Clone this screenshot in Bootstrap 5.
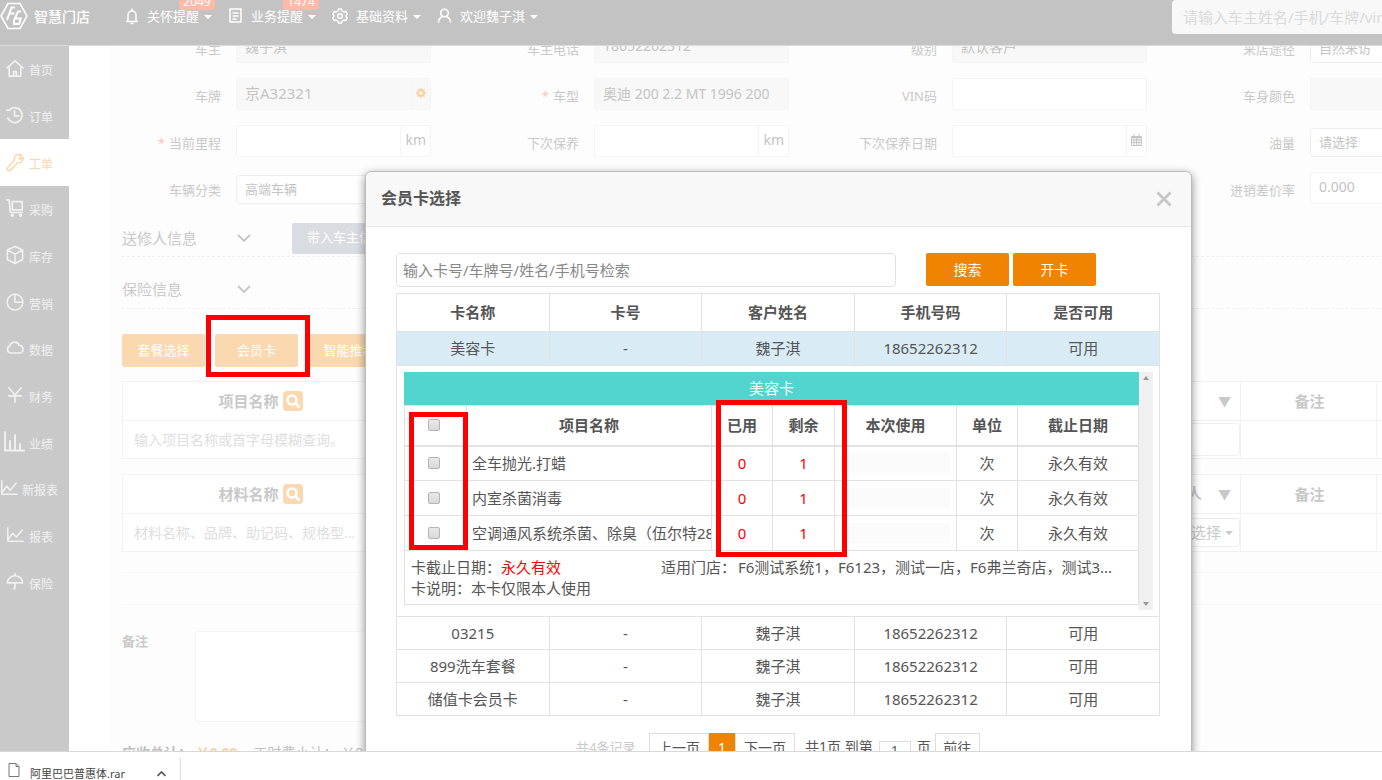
<!DOCTYPE html>
<html lang="zh-CN">
<head>
<meta charset="utf-8">
<meta name="viewport" content="width=device-width, initial-scale=1">
<title>智慧门店</title>
<link href="https://cdn.jsdelivr.net/npm/bootstrap@5.3.0/dist/css/bootstrap.min.css" rel="stylesheet">
<style>
  body { font-family: "Noto Sans", "Noto Sans CJK SC", sans-serif; font-size: 15px; line-height: 21px; color: #555; background: #fff; }
  svg { display: block; flex: none; }
  .line-icon { fill: none; stroke: currentColor; stroke-width: 2; stroke-linecap: round; stroke-linejoin: round; }
  .screen { height: 100vh; }

  /* top bar */
  .top-bar { height: 46px; background: #c3c3c3; color: #fff; font-size: 13px; border-bottom: 1px solid #dcdcdc; }
  .top-bar a { color: #fff; }
  .top-inner { height: 32px; }
  .brand { gap: 6px; margin-right: 35px; }
  .brand-name { font-size: 14px; font-weight: 500; }
  .menu-link { gap: 8px; }
  .menu-link::after { content: ""; border: 4px solid transparent; border-top-color: #fff; border-bottom: 0; margin-left: -3px; margin-top: 2px; }
  .count-tag { top: -12px; right: -3px; width: 36px; height: 16px; line-height: 16px; background: #ffb9a9; font-size: 12px; border-radius: 3px; text-align: center; }
  .top-search { width: 240px; height: 34px; margin-right: -30px; background: #f8f8f8; border: 0; border-radius: 4px; font-size: 15px; padding: 0 11px; }
  .top-search::placeholder { color: #dadada; opacity: 1; }

  /* side menu */
  .side { width: 69px; background: #c9c9c9; flex: none; }
  .side-list { height: 560px; }
  .side-list a { flex: 1; color: #f1f1f1; font-size: 12px; gap: 5px; padding: 0 0 0 6px; }
  .side-list a svg { margin-bottom: 2px; }
  .side-list a span { padding-top: 3px; }
  .side-list a.wide { padding-left: 0; gap: 4px; }
  .side-list a.current { background: #fff; color: #fbd5ae; }

  /* work order page behind the dialog */
  .page-sheet { min-width: 1444px; margin: -23px 0 0 41px; padding-left: 12px; background: #fdfdfd; color: #c9c9c9; }
  .field-grid { display: grid; grid-template-columns: repeat(4, 1fr); grid-auto-rows: 47px; }
  .field label { width: 99px; text-align: right; font-size: 13px; padding-top: 5px; margin-right: 15px; flex: none; }
  .req { color: #fcc3b8; margin-right: 4px; }
  .field .form-control, .field .form-select, .field .input-group-text { font-size: 14px; line-height: 20px; color: #c4c4c4; border: 1px solid #f5f5f5; border-radius: 2px; padding: 4px 8px 6px; height: 32px; background-color: #fff; }
  .field .box { width: 195px; flex: none; }
  .field .form-control:disabled { background: #f8f8f8; }
  .field .plate { font-size: 15px; }
  .field .form-select { font-size: 13px; height: 29px; padding: 3px 8px; margin-top: 3px; border-color: #eee; border-radius: 4px; background-image: none; }
  .field .input-group-text { padding: 4px 4px 6px; }
  .field .input-group-text.gear { background: #f8f8f8; }
  .fold { border-bottom: 1px dashed #efefef; }
  .fold-a { height: 46px; padding-top: 9px; }
  .fold-b { height: 52px; padding-top: 14px; }
  .fold-name { width: 115px; font-size: 15px; }
  .btn-grey { height: 31px; width: 150px; background: #d9dce1; color: #fff; font-size: 13px; border-radius: 2px; padding: 0 14px; margin-left: 41px; text-align: left; }
  .tools { gap: 10px; padding: 25px 0 14px; }
  .btn-pale { width: 83px; height: 33px; background: #fad8b0; color: #fff; font-size: 13px; border-radius: 2px; padding: 0; }
  .grid-table { table-layout: fixed; border: 1px solid #efefef; border-top-color: #e6e6e6; margin: 0 0 15px; --bs-table-color: #c9c9c9; }
  .grid-table th, .grid-table td { border: 1px solid #f1f1f1; height: 39px; padding: 0 9px 0 11px; vertical-align: middle; background: #fff; color: #c9c9c9; }
  .grid-table td { height: 38px; }
  .grid-table input { font-size: 14px; border: 0; padding: 0; background: transparent; }
  .grid-table input::placeholder { color: #dedede; opacity: 1; }
  .tri { font-size: 13px; font-weight: 400; }
  .find-btn { width: 20px; height: 20px; background: #fad8b0; border: 0; border-radius: 4px; padding: 2px; color: #fff; }
  .cell-box { height: 33px; width: 120px; border: 1px solid #efefef; border-radius: 4px; margin-right: -9px; }
  .cell-drop { height: 29px; width: 120px; border: 1px solid #eee; border-radius: 4px; margin-right: -9px; background: #fff; color: #c9c9c9; font-size: 15px; padding: 0 6px; }
  .thin-block { height: 33px; border: 1px solid #f8f8f8; border-width: 1px 0; margin-top: 20px; }
  .note-row { padding-top: 26px; }
  .note-label { width: 73px; font-size: 13px; font-weight: 700; }
  .note-area { width: 700px; height: 91px; border: 1px solid #f5f5f5; border-radius: 2px; resize: none; }
  .sums { padding-top: 20px; font-size: 14px; gap: 16px; color: #c0c0c0; }
  .sum-main { color: #fad3a5; }

  /* red callout frames */
  .callout { position: absolute; border: 5px solid #f00; pointer-events: none; z-index: 3; }
  .callout-card { left: -9px; top: -19px; width: 104px; height: 62px; }
  .callout-checks { left: 5px; top: 40px; width: 59px; height: 138px; }
  .callout-usage { left: 312px; top: 28px; width: 131px; height: 157px; }

  /* membership card dialog */
  .dialog-layer { position: absolute; inset: 171px 0 0 0; padding-left: 175px; }
  .card-dialog { width: 827px; border: 1px solid #bbb; border-radius: 6px; box-shadow: 0 3px 10px rgba(0,0,0,.45); background: #fff; }
  .dialog-head { height: 55px; background: #f8f8f8; border-bottom: 1px solid #e8e8e8; border-radius: 6px 6px 0 0; padding: 0 19px 0 15px; }
  .dialog-head h1 { font-size: 16px; font-weight: 700; margin: 0; color: #555; }
  .dialog-body { padding: 26px 31px 40px 30px; }
  .find-card { width: 500px; height: 34px; font-size: 15px; padding: 0 6px; border: 1px solid #e2e2e2; border-radius: 4px; margin-right: 30px; }
  .find-card::placeholder { color: #888; opacity: 1; }
  .btn-orange { width: 83px; height: 33px; background: #f08300; color: #fff; font-size: 14px; border-radius: 2px; padding: 0; }
  .btn-orange:hover { background: #d87600; color: #fff; }
  .cards { table-layout: fixed; margin: 6px 0 0; text-align: center; border-color: #e2e2e2; --bs-table-color: #555; }
  .cards th, .cards td { padding: 0; height: 33px; vertical-align: middle; border: 1px solid #e2e2e2; color: #555; }
  .cards thead th { height: 38px; }
  .cards .picked > td { background: #d9ecf5; height: 34px; }
  .cards .open-cell { height: 251px; padding: 6px 6px 6px 7px; vertical-align: top; }
  .usage { table-layout: fixed; margin: 0; --bs-table-color: #555; }
  .usage caption { caption-side: top; background: #52d5ce; color: #fff; height: 33px; line-height: 33px; padding: 0; text-align: center; }
  .usage thead th { height: 40px; border-bottom: 2px solid #e2e2e2; }
  .usage tbody td { height: 35px; overflow: hidden; white-space: nowrap; }
  .usage .num { color: #f00; }
  .usage input[type=checkbox] { width: 12px; height: 12px; margin: 0; display: block; appearance: none; border: 1px solid #b5b5b5; border-radius: 2px; background: linear-gradient(#e9e9e9, #d9d9d9); }
  .usage input[type=checkbox]:checked { background: #f08300; }
  .usage .pad-check { padding-left: 23px; }
  .usage thead .pad-check { vertical-align: top; padding-top: 13px; }
  .usage .use-now { display: block; width: 109px; height: 20px; border: 0; background: #fbfbfb; margin: 0 auto; }
  .usage .item { text-align: left; padding-left: 5px; }
  .card-info { border: 1px solid #e2e2e2; border-top: 0; height: 54px; padding: 6px 7px 0 6px; text-align: left; }
  .card-info > div { white-space: nowrap; }
  .info-left { width: 250px; }
  .info-label { width: 77px; }
  .until { color: #f00; }
  .scroll-strip { width: 14px; background: #f0f0f0; padding: 4px 0; flex: none; height: 238px; }
  .pager { font-size: 14px; margin-top: 17px; padding-left: 180px; line-height: 28px; }
  .pager .total { font-size: 13px; color: #c9c9c9; width: 73px; }
  .pager button { height: 30px; background: #fff; border: 1px solid #ddd; color: #555; padding: 0; border-radius: 0; }
  .pager button.step { width: 60px; }
  .pager button.here { width: 26px; background: #f08300; border-color: #f08300; color: #fff; }
  .pager button.jump { width: 45px; }
  .pager label { margin: 0 6px 0 10px; }
  .pager input { width: 32px; height: 18px; border: 1px solid #ddd; font-size: 13px; text-align: center; color: #555; padding: 0; margin: 8px 6px 0 0; }

  /* download shelf */
  .shelf { height: 29px; border-top: 1px solid #d8d8d8; background: #fff; color: #444; font-size: 11px; flex: none; }
  .shelf-item { width: 181px; height: 40px; margin-top: 6px; border-right: 1px solid #ddd; padding: 5px 14px 0 8px; gap: 10px; }
</style>
</head>
<body>
<div class="screen d-flex flex-column overflow-hidden">
  <div class="flex-grow-1 d-flex flex-column position-relative overflow-hidden">
    <header class="top-bar d-flex align-items-start flex-shrink-0">
      <nav class="top-inner d-flex align-items-center" aria-label="主菜单">
        <a href="#" class="brand d-flex align-items-center text-decoration-none">
          <svg width="28" height="28" viewBox="0 0 28 28" fill="none" stroke="#fff" stroke-width="1.6"><path d="M8 1.5h12l7 12.500-7 12.500H8L1 14z"/><path d="M15 5.500h-3.500L7 18M9.500 11.500h5M21 9.500h-3l-4 9v3.500h5l1.800-5.500H16" stroke-width="2"/></svg>
          <span class="brand-name">智慧门店</span>
        </a>
        <a href="#" class="menu-link d-flex align-items-center text-decoration-none position-relative">
          <svg class="line-icon" width="14" height="17" viewBox="0 0 14 17"><path d="M7 1v2M3 12V7a4 4 0 0 1 8 0v5l1 1.500H2zM6 15.500h2" stroke-width="1.500"/></svg>
          <span>关怀提醒</span><span class="count-tag position-absolute">2049</span>
        </a>
        <a href="#" class="menu-link d-flex align-items-center text-decoration-none position-relative ms-3">
          <svg class="line-icon" width="15" height="16" viewBox="0 0 15 16"><path d="M2 1h11v13H2zM5 5h5M5 8h5M5 11h3" stroke-width="1.500"/></svg>
          <span>业务提醒</span><span class="count-tag position-absolute">1474</span>
        </a>
        <a href="#" class="menu-link d-flex align-items-center text-decoration-none ms-3">
          <svg class="line-icon" width="16" height="16" viewBox="0 0 16 16"><path d="M6.500 1h3l.6 2 1.800 1 2.100-.5 1.500 2.600L14 7.600v1l1.500 1.300-1.500 2.600-2.100-.5-1.800 1-.6 2h-3l-.6-2-1.800-1-2.100.5L.6 9.900 2 8.600v-1L.6 6.100l1.500-2.600 2.100.5 1.800-1z" stroke-width="1.400"/><circle cx="8" cy="8" r="2.300" stroke-width="1.400"/></svg>
          <span>基础资料</span>
        </a>
        <a href="#" class="menu-link d-flex align-items-center text-decoration-none ms-3">
          <svg class="line-icon" width="15" height="16" viewBox="0 0 15 16"><circle cx="7.500" cy="5" r="3.800" stroke-width="1.600"/><path d="M1.500 14c0-3 2-4.500 4-5.500M13.500 14c0-3-2-4.500-4-5.500" stroke-width="1.600"/></svg>
          <span>欢迎魏子淇</span>
        </a>
      </nav>
      <input class="top-search ms-auto" type="text" placeholder="请输入车主姓名/手机/车牌/vin" aria-label="搜索">
    </header>

    <div class="d-flex flex-grow-1 overflow-hidden">
      <nav class="side" aria-label="侧栏">
        <div class="side-list d-flex flex-column">
          <a href="#" class="d-flex align-items-center text-decoration-none"><svg class="line-icon" width="18" height="20" viewBox="0 0 20 22"><path d="M1 11 10 3l9 8M3.500 9.500V20h13V9.500M8.500 20v-5h3v5" stroke-width="1.800"/></svg><span>首页</span></a>
          <a href="#" class="d-flex align-items-center text-decoration-none"><svg class="line-icon" width="18" height="20" viewBox="0 0 20 22"><path d="M3.500 5.500a8.300 8.300 0 1 1-1.500 9M1 5.500h3.500M9.500 6.500V12H14" stroke-width="1.900"/></svg><span>订单</span></a>
          <a href="#" class="d-flex align-items-center text-decoration-none current"><svg class="line-icon" width="18" height="20" viewBox="0 0 20 22"><path d="M17.500 3.500 14.500 6.500l1.200 1.600L19 6c.5 4-2.500 6.500-6 5.800L5 20c-2 1.500-4.500-.5-3.200-2.800L9.500 9C8.500 5 12 1 17.500 3.500z" stroke-width="1.700"/></svg><span>工单</span></a>
          <a href="#" class="d-flex align-items-center text-decoration-none"><svg class="line-icon" width="18" height="20" viewBox="0 0 20 22"><path d="M1 2h2.500l1.500 14h13M7 4h11v9H7z" stroke-width="1.900"/><circle cx="7" cy="19" r="1"/><circle cx="16" cy="19" r="1"/></svg><span>采购</span></a>
          <a href="#" class="d-flex align-items-center text-decoration-none"><svg class="line-icon" width="18" height="20" viewBox="0 0 20 22"><path d="m10 1.500 8.500 4v10.500L10 20.500 1.500 16V5.500zM1.500 5.500l8.500 4.500 8.500-4.500M10 10v10" stroke-width="1.700"/></svg><span>库存</span></a>
          <a href="#" class="d-flex align-items-center text-decoration-none"><svg class="line-icon" width="18" height="20" viewBox="0 0 20 22"><path d="M10 2.500a8.700 8.700 0 1 0 8.700 8.700" stroke-width="1.700"/><path d="M10 2.500v8.700h8.700a8.700 8.700 0 0 0-8.700-8.700z" stroke-width="1.700"/></svg><span>营销</span></a>
          <a href="#" class="d-flex align-items-center text-decoration-none"><svg class="line-icon" width="18" height="20" viewBox="0 0 20 22"><path d="M5 16.500a4 4 0 0 1-.5-7.800C5.500 3.500 13 3 14.500 8c5.500 0 6 8 .8 8.500z" stroke-width="1.800"/></svg><span>数据</span></a>
          <a href="#" class="d-flex align-items-center text-decoration-none"><svg class="line-icon" width="18" height="20" viewBox="0 0 20 22"><path d="M3 3l7 8 7-8M3 12h14M10 11v8" stroke-width="1.800"/></svg><span>财务</span></a>
          <a href="#" class="d-flex align-items-center text-decoration-none wide"><svg class="line-icon" width="25" height="24" viewBox="0 0 25 24"><path d="M5 2v18.500h19M10 11v9M15 5v15M20 14v6" stroke-width="1.900"/></svg><span>业绩</span></a>
          <a href="#" class="d-flex align-items-center text-decoration-none wide"><svg class="line-icon" width="18" height="20" viewBox="0 0 20 22"><path d="M2 3v15h17M3 15l4.500-6 4 4.500L18 5.500" stroke-width="1.700"/></svg><span>新报表</span></a>
          <a href="#" class="d-flex align-items-center text-decoration-none"><svg class="line-icon" width="18" height="20" viewBox="0 0 20 22"><path d="M2 3v15h17M3 15l4.500-6 4 4.500L18 5.500" stroke-width="1.700"/></svg><span>报表</span></a>
          <a href="#" class="d-flex align-items-center text-decoration-none"><svg class="line-icon" width="18" height="20" viewBox="0 0 20 22"><path d="M1.500 12a8.500 8 0 0 1 17 0zM10 2v2M10 12v6M8.500 18.500h1.500" stroke-width="1.800"/></svg><span>保险</span></a>
        </div>
      </nav>

      <main class="flex-grow-1 overflow-hidden">
        <div class="page-sheet">
          <div class="field-grid">
            <div class="field d-flex align-items-center"><label for="f1">车主</label><input id="f1" class="form-control box" value="魏子淇" disabled></div>
            <div class="field d-flex align-items-center"><label for="f2">车主电话</label><input id="f2" class="form-control box" value="18652262312" disabled></div>
            <div class="field d-flex align-items-center"><label for="f3">级别</label><input id="f3" class="form-control box" value="默认客户" disabled></div>
            <div class="field d-flex align-items-center"><label for="f4">来店途径</label><select id="f4" class="form-select box"><option>自然来访</option></select></div>

            <div class="field d-flex align-items-center"><label for="f5">车牌</label><div class="input-group flex-nowrap box"><input id="f5" class="form-control plate" value="京A32321" disabled><span class="input-group-text gear"><svg width="10" height="10" viewBox="0 0 12 12"><circle cx="6" cy="6" r="3.500" fill="none" stroke="#fcd2a2" stroke-width="2.600"/><path d="M6 0v12M0 6h12M1.800 1.800l8.400 8.400M10.200 1.800 1.800 10.200" stroke="#fcd2a2" stroke-width="1.800"/><circle cx="6" cy="6" r="2" fill="#f8f8f8"/></svg></span></div></div>
            <div class="field d-flex align-items-center"><label for="f6"><span class="req">*</span>车型</label><input id="f6" class="form-control box" value="奥迪 200 2.2 MT 1996 200" disabled></div>
            <div class="field d-flex align-items-center"><label for="f7">VIN码</label><input id="f7" class="form-control box"></div>
            <div class="field d-flex align-items-center"><label for="f8">车身颜色</label><input id="f8" class="form-control box" disabled></div>

            <div class="field d-flex align-items-center"><label for="f9"><span class="req">*</span>当前里程</label><div class="input-group flex-nowrap box"><input id="f9" class="form-control"><span class="input-group-text">km</span></div></div>
            <div class="field d-flex align-items-center"><label for="f10">下次保养</label><div class="input-group flex-nowrap box"><input id="f10" class="form-control"><span class="input-group-text">km</span></div></div>
            <div class="field d-flex align-items-center"><label for="f11">下次保养日期</label><div class="input-group flex-nowrap box"><input id="f11" class="form-control"><span class="input-group-text"><svg width="11" height="12" viewBox="0 0 11 12" fill="none" stroke="#c4c4c4"><path d="M.5 2.500h10v9H.5zM.5 3.500h10M.5 6h10M.5 8.500h10M3 4v8M5.500 4v8M8 4v8M3 0v3M8 0v3"/></svg></span></div></div>
            <div class="field d-flex align-items-center"><label for="f12">油量</label><select id="f12" class="form-select box"><option>请选择</option></select></div>

            <div class="field d-flex align-items-center"><label for="f13">车辆分类</label><select id="f13" class="form-select box"><option>高端车辆</option></select></div>
            <div></div>
            <div></div>
            <div class="field d-flex align-items-center"><label for="f14">进销差价率</label><input id="f14" class="form-control box" value="0.000"></div>
          </div>

          <div class="fold fold-a d-flex align-items-center">
            <span class="fold-name">送修人信息</span>
            <svg width="14" height="9" viewBox="0 0 14 9" fill="none" stroke="#c6c6c6" stroke-width="1.800"><path d="m1 1 6 6 6-6"/></svg>
            <button type="button" class="btn btn-grey">带入车主信息</button>
          </div>
          <div class="fold fold-b d-flex align-items-center">
            <span class="fold-name">保险信息</span>
            <svg width="14" height="9" viewBox="0 0 14 9" fill="none" stroke="#c6c6c6" stroke-width="1.800"><path d="m1 1 6 6 6-6"/></svg>
          </div>

          <div class="tools d-flex">
            <button type="button" class="btn btn-pale">套餐选择</button>
            <div class="position-relative"><button type="button" class="btn btn-pale d-block">会员卡</button><div class="callout callout-card"></div></div>
            <button type="button" class="btn btn-pale">智能推荐</button>
          </div>

          <table class="table grid-table">
            <colgroup><col style="width:274px"><col style="width:844px"><col style="width:136px"><col></colgroup>
            <tr><th><div class="d-flex justify-content-center align-items-center gap-1">项目名称<button type="button" class="find-btn" aria-label="查找项目"><svg width="16" height="16" viewBox="0 0 16 16" fill="none" stroke="#fff" stroke-width="2.600"><circle cx="7" cy="7" r="4.500"/><path d="m10.500 10.500 4 4"/></svg></button></div></th><th class="text-end"><span class="tri">▼</span></th><th class="text-center">备注</th><th></th></tr>
            <tr><td><input class="w-100" type="text" placeholder="输入项目名称或首字母模糊查询。" aria-label="项目名称"></td><td><div class="cell-box ms-auto"></div></td><td></td><td></td></tr>
          </table>
          <table class="table grid-table">
            <colgroup><col style="width:274px"><col style="width:844px"><col style="width:136px"><col></colgroup>
            <tr><th><div class="d-flex justify-content-center align-items-center gap-1">材料名称<button type="button" class="find-btn" aria-label="查找材料"><svg width="16" height="16" viewBox="0 0 16 16" fill="none" stroke="#fff" stroke-width="2.600"><circle cx="7" cy="7" r="4.500"/><path d="m10.500 10.500 4 4"/></svg></button></div></th><th class="text-end">领料人<span class="tri ms-3">▼</span></th><th class="text-center">备注</th><th></th></tr>
            <tr><td><input class="w-100" type="text" placeholder="材料名称、品牌、助记码、规格型..." aria-label="材料名称"></td><td><button type="button" class="cell-drop ms-auto d-flex align-items-center justify-content-end gap-1">请选择 <svg width="8" height="4" viewBox="0 0 8 4"><path d="M0 0h8L4 4z" fill="#c9c9c9"/></svg></button></td><td></td><td></td></tr>
          </table>

          <div class="thin-block"></div>
          <div class="note-row d-flex">
            <label for="note" class="note-label">备注</label>
            <textarea id="note" class="note-area"></textarea>
          </div>
          <div class="sums d-flex">
            <strong>应收总计： <span class="sum-main">￥0.00</span></strong><span>工时费小计： ￥0.00</span>
          </div>
        </div>
      </main>
    </div>

    <div class="dialog-layer d-flex justify-content-center align-items-start">
      <section class="card-dialog flex-shrink-0" role="dialog" aria-labelledby="dlgTitle">
        <div class="dialog-head d-flex align-items-center justify-content-between">
          <h1 id="dlgTitle">会员卡选择</h1>
          <button type="button" class="btn p-0 border-0" aria-label="关闭"><svg width="16" height="16" viewBox="0 0 16 16" stroke="#c6c6c6" stroke-width="2.800"><path d="m1.500 1.500 13 13M14.500 1.500l-13 13"/></svg></button>
        </div>
        <div class="dialog-body">
          <div class="d-flex align-items-start">
            <input class="find-card" type="text" placeholder="输入卡号/车牌号/姓名/手机号检索" aria-label="检索会员卡">
            <button type="button" class="btn btn-orange">搜索</button>
            <button type="button" class="btn btn-orange ms-1">开卡</button>
          </div>
          <table class="table cards">
            <thead><tr><th>卡名称</th><th>卡号</th><th>客户姓名</th><th>手机号码</th><th>是否可用</th></tr></thead>
            <tbody>
              <tr class="picked"><td>美容卡</td><td>-</td><td>魏子淇</td><td>18652262312</td><td>可用</td></tr>
              <tr><td colspan="5" class="open-cell">
                <div class="d-flex align-items-start position-relative">
                  <div class="flex-grow-1 overflow-hidden">
                    <table class="table usage">
                      <caption>美容卡</caption>
                      <colgroup><col style="width:62px"><col style="width:245px"><col style="width:61px"><col style="width:62px"><col style="width:122px"><col style="width:61px"><col></colgroup>
                      <thead><tr><th class="pad-check"><input type="checkbox" aria-label="全选"></th><th>项目名称</th><th>已用</th><th>剩余</th><th>本次使用</th><th>单位</th><th>截止日期</th></tr></thead>
                      <tbody>
                        <tr><td class="pad-check"><input type="checkbox" aria-label="选择第1项"></td><td class="item">全车抛光.打蜡</td><td class="num">0</td><td class="num">1</td><td><input class="use-now" type="text" aria-label="本次使用1"></td><td>次</td><td>永久有效</td></tr>
                        <tr><td class="pad-check"><input type="checkbox" aria-label="选择第2项"></td><td class="item">内室杀菌消毒</td><td class="num">0</td><td class="num">1</td><td><input class="use-now" type="text" aria-label="本次使用2"></td><td>次</td><td>永久有效</td></tr>
                        <tr><td class="pad-check"><input type="checkbox" aria-label="选择第3项"></td><td class="item">空调通风系统杀菌、除臭（伍尔特280）</td><td class="num">0</td><td class="num">1</td><td><input class="use-now" type="text" aria-label="本次使用3"></td><td>次</td><td>永久有效</td></tr>
                      </tbody>
                    </table>
                    <div class="card-info">
                      <div class="d-flex"><span class="info-left">卡截止日期：<span class="until">永久有效</span></span><span class="info-label">适用门店：</span><span>F6测试系统1，F6123，测试一店，F6弗兰奇店，测试3...</span></div>
                      <div>卡说明：本卡仅限本人使用</div>
                    </div>
                  </div>
                  <div class="scroll-strip d-flex flex-column align-items-center justify-content-between">
                    <svg width="6" height="4" viewBox="0 0 6 4"><path d="M0 4h6L3 0z" fill="#999"/></svg>
                    <svg width="6" height="4" viewBox="0 0 6 4"><path d="M0 0h6L3 4z" fill="#999"/></svg>
                  </div>
                  <div class="callout callout-checks"></div>
                  <div class="callout callout-usage"></div>
                </div>
              </td></tr>
              <tr><td>03215</td><td>-</td><td>魏子淇</td><td>18652262312</td><td>可用</td></tr>
              <tr><td>899洗车套餐</td><td>-</td><td>魏子淇</td><td>18652262312</td><td>可用</td></tr>
              <tr><td>储值卡会员卡</td><td>-</td><td>魏子淇</td><td>18652262312</td><td>可用</td></tr>
            </tbody>
          </table>
          <div class="pager d-flex">
            <span class="total">共4条记录</span>
            <button type="button" class="step">上一页</button><button type="button" class="here">1</button><button type="button" class="step">下一页</button>
            <label for="goPage">共1页 到第</label>
            <input id="goPage" type="text" value="1">
            <span class="me-1">页</span>
            <button type="button" class="jump">前往</button>
          </div>
        </div>
      </section>
    </div>
  </div>

  <footer class="shelf overflow-hidden">
    <div class="shelf-item d-flex align-items-start">
      <svg width="12" height="14" viewBox="0 0 12 14" fill="none" stroke="#777"><path d="M1 .5h7l3 3v10H1zM8 .5v3h3"/></svg>
      <span>阿里巴巴普惠体.rar</span>
      <svg class="ms-auto mt-2" width="9" height="6" viewBox="0 0 9 6" fill="none" stroke="#555" stroke-width="1.600"><path d="m.5 5 4-4 4 4"/></svg>
    </div>
  </footer>
</div>
<script src="https://cdn.jsdelivr.net/npm/bootstrap@5.3.0/dist/js/bootstrap.bundle.min.js"></script>
</body>
</html>
